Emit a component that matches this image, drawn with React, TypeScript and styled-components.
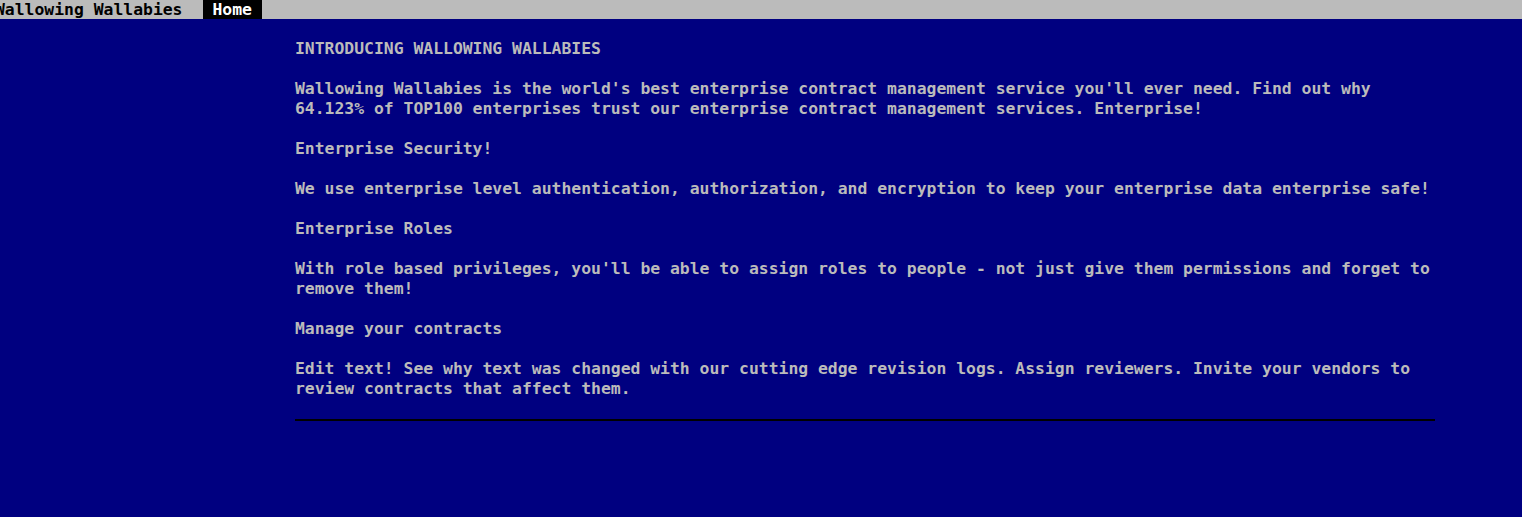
import React from "react";
import styled, { createGlobalStyle } from "styled-components";

const GlobalStyle = createGlobalStyle`
  html, body {
    margin: 0;
    padding: 0;
    background: #000080;
  }
  body {
    font-family: "DejaVu Sans Mono", "Liberation Mono", monospace;
    font-weight: bold;
    font-size: 16.4px;
    line-height: 20px;
    color: #bbbbbb;
  }
`;

const sections = [
  {
    title: "INTRODUCING WALLOWING WALLABIES",
    body: "Wallowing Wallabies is the world's best enterprise contract management service you'll ever need. Find out why 64.123% of TOP100 enterprises trust our enterprise contract management services. Enterprise!",
  },
  {
    title: "Enterprise Security!",
    body: "We use enterprise level authentication, authorization, and encryption to keep your enterprise data enterprise safe!",
  },
  {
    title: "Enterprise Roles",
    body: "With role based privileges, you'll be able to assign roles to people - not just give them permissions and forget to remove them!",
  },
  {
    title: "Manage your contracts",
    body: "Edit text! See why text was changed with our cutting edge revision logs. Assign reviewers. Invite your vendors to review contracts that affect them.",
  },
];

function App() {
  return (
    <>
      <GlobalStyle />
      <Page>
        <NavBar>
          <Brand>Wallowing Wallabies</Brand>
          <NavLink>Home</NavLink>
        </NavBar>
        <Main>
          {sections.map((s) => (
            <React.Fragment key={s.title}>
              <Para>{s.title}</Para>
              <Para>{s.body}</Para>
            </React.Fragment>
          ))}
          <Rule />
        </Main>
      </Page>
    </>
  );
}

export default App;

const Page = styled.div`
  min-height: 517px;
  background: #000080;
`;

const NavBar = styled.nav`
  display: flex;
  align-items: stretch;
  height: 19px;
  background: #bbbbbb;
  color: #000000;
  line-height: 19px;
  overflow: hidden;
`;

const Brand = styled.span`
  margin-left: -5px;
  white-space: pre;
`;

const NavLink = styled.span`
  margin-left: 20px;
  padding: 0 10px;
  background: #000000;
  color: #ffffff;
`;

const Main = styled.main`
  width: 1140px;
  padding: 20px 0 0 295px;
`;

const Para = styled.p`
  margin: 0 0 20px;
`;

const Rule = styled.hr`
  margin: 3px 0 0;
  border: none;
  height: 2px;
  background: #000000;
`;
